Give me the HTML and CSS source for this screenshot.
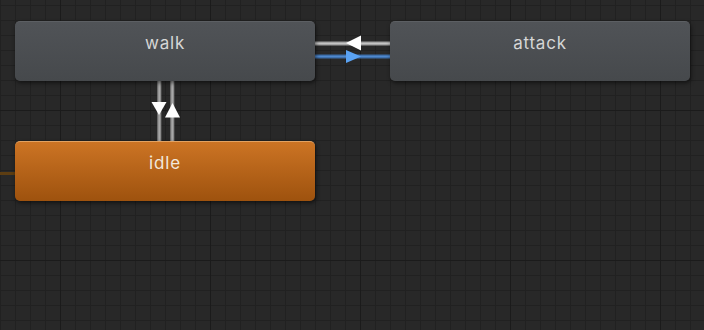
FILE: index.html
```html
<!DOCTYPE html>
<html lang="en">
<head>
    <meta charset="UTF-8">
    <meta name="viewport" content="width=device-width, initial-scale=1.0">
    <title>Animator</title>
    <link rel="stylesheet" href="styles.css">
</head>
<body>
    <div class="graph">
        <svg class="links" width="704" height="330" viewBox="0 0 704 330">
            <!-- entry -> idle -->
            <line x1="0" y1="173.5" x2="15" y2="173.5" stroke="#5c3d12" stroke-width="3"/>
            <!-- attack -> walk -->
            <line x1="315" y1="43.5" x2="390" y2="43.5" stroke="#9c9c9c" stroke-width="4"/>
            <line x1="315" y1="43.5" x2="390" y2="43.5" stroke="#c4c4c4" stroke-width="1.5"/>
            <polygon points="346,43 361,35.5 361,50.5" fill="#ffffff"/>
            <!-- walk -> attack -->
            <line x1="315" y1="56.5" x2="390" y2="56.5" stroke="#3a6aa4" stroke-width="4"/>
            <line x1="315" y1="56.5" x2="390" y2="56.5" stroke="#4f88cc" stroke-width="1.5"/>
            <polygon points="361,56.5 346,50 346,63" fill="#5aa2f2"/>
            <!-- walk -> idle -->
            <line x1="159.3" y1="81" x2="159.3" y2="141" stroke="#8a8a8a" stroke-width="4"/>
            <line x1="159.3" y1="81" x2="159.3" y2="141" stroke="#a8a8a8" stroke-width="1.5"/>
            <polygon points="151.5,102 166.5,102 159,115" fill="#ffffff"/>
            <!-- idle -> walk -->
            <line x1="172.3" y1="81" x2="172.3" y2="141" stroke="#8a8a8a" stroke-width="4"/>
            <line x1="172.3" y1="81" x2="172.3" y2="141" stroke="#a8a8a8" stroke-width="1.5"/>
            <polygon points="172.5,103 165,117.5 180,117.5" fill="#ffffff"/>
        </svg>

        <div class="state walk">walk</div>
        <div class="state attack">attack</div>
        <div class="state idle default">idle</div>
    </div>
</body>
</html>
```

FILE: styles.css
```css
body {
    margin: 0;
    background-color: #282828;
    font-family: Inter, "Noto Sans", sans-serif;
    overflow: hidden;
}
.graph {
    position: relative;
    width: 704px;
    height: 330px;
    background-color: #282828;
    background-image:
        linear-gradient(to right, #1b1b1b 1px, transparent 1px),
        linear-gradient(to bottom, #1b1b1b 1px, transparent 1px),
        linear-gradient(to right, #212121 1px, transparent 1px),
        linear-gradient(to bottom, #212121 1px, transparent 1px);
    background-size: 150px 150px, 150px 150px, 15px 15px, 15px 15px;
    background-position: 60px 110px, 60px 110px, 0 5px, 0 5px;
}
.links {
    position: absolute;
    left: 0;
    top: 0;
}
.state {
    position: absolute;
    width: 300px;
    height: 60px;
    box-sizing: border-box;
    padding-top: 10px;
    border-radius: 5px;
    text-align: center;
    font-size: 17px;
    line-height: 22px;
    letter-spacing: 0.8px;
    color: #d6d6d6;
    background: linear-gradient(to bottom, #505357, #46494c);
    border-top: 1px solid #5c5f63;
    box-shadow: 1px 2px 4px rgba(0, 0, 0, 0.55);
}
.walk {
    left: 15px;
    top: 21px;
}
.attack {
    left: 390px;
    top: 21px;
}
.idle {
    left: 15px;
    top: 141px;
}
.default {
    color: #f2e8dc;
    background: linear-gradient(to bottom, #cc7424, #9e520e);
    border-top: 1px solid #e2a262;
}
```
